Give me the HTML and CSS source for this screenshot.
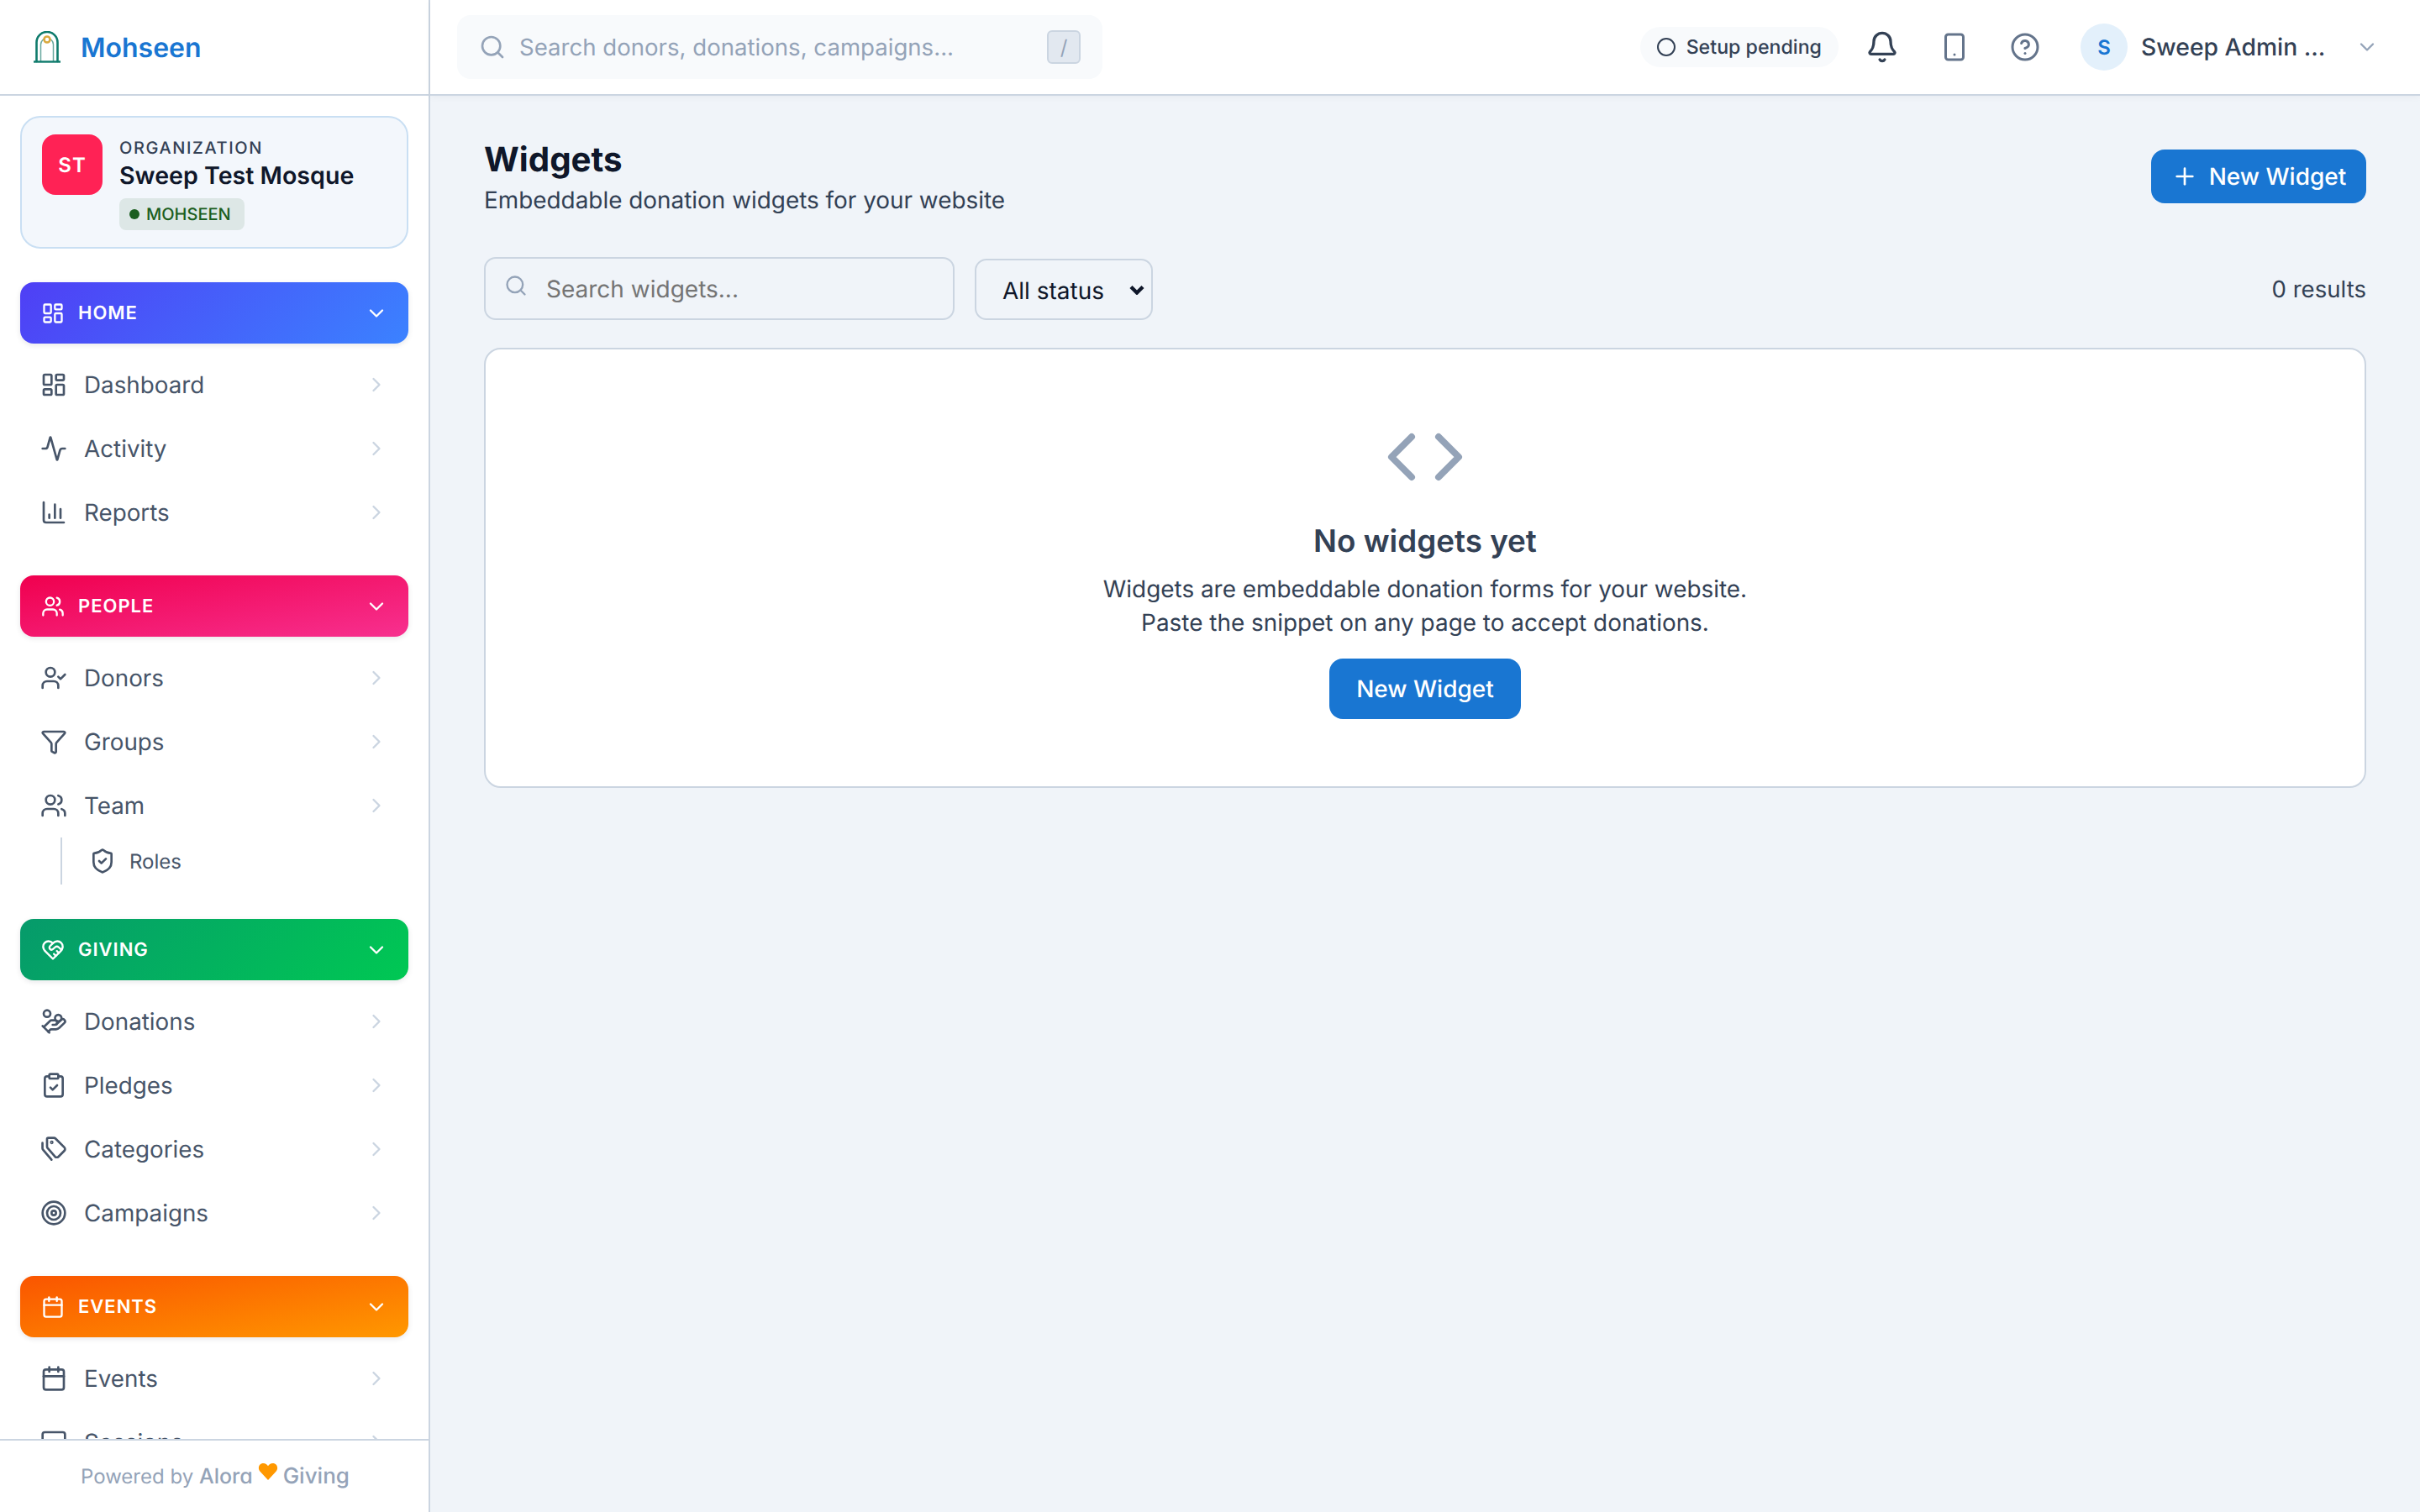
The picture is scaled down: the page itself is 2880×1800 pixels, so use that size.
FILE: index.html
```html
<!DOCTYPE html>
<html lang="en">
<head>
<meta charset="utf-8">
<title>Widgets</title>
<link rel="stylesheet" href="styles.css">
</head>
<body>
<svg class="sprite" width="0" height="0" aria-hidden="true">
  <symbol id="i-dash" viewBox="0 0 24 24"><rect width="7" height="9" x="3" y="3" rx="1"/><rect width="7" height="5" x="14" y="3" rx="1"/><rect width="7" height="9" x="14" y="12" rx="1"/><rect width="7" height="5" x="3" y="16" rx="1"/></symbol>
  <symbol id="i-activity" viewBox="0 0 24 24"><path d="M22 12h-2.48a2 2 0 0 0-1.93 1.46l-2.35 8.36a.25.25 0 0 1-.48 0L9.24 2.18a.25.25 0 0 0-.48 0l-2.35 8.36A2 2 0 0 1 4.49 12H2"/></symbol>
  <symbol id="i-chart" viewBox="0 0 24 24"><path d="M3 3v16a2 2 0 0 0 2 2h16"/><path d="M18 17V9"/><path d="M13 17V5"/><path d="M8 17v-3"/></symbol>
  <symbol id="i-users" viewBox="0 0 24 24"><path d="M16 21v-2a4 4 0 0 0-4-4H6a4 4 0 0 0-4 4v2"/><circle cx="9" cy="7" r="4"/><path d="M22 21v-2a4 4 0 0 0-3-3.87"/><path d="M16 3.13a4 4 0 0 1 0 7.75"/></symbol>
  <symbol id="i-usercheck" viewBox="0 0 24 24"><path d="M16 21v-2a4 4 0 0 0-4-4H6a4 4 0 0 0-4 4v2"/><circle cx="9" cy="7" r="4"/><polyline points="16 11 18 13 22 9"/></symbol>
  <symbol id="i-funnel" viewBox="0 0 24 24"><path d="M10 20a1 1 0 0 0 .553.895l2 1A1 1 0 0 0 14 21v-7a2 2 0 0 1 .517-1.341L21.74 4.67A1 1 0 0 0 21 3H3a1 1 0 0 0-.742 1.67l7.225 7.989A2 2 0 0 1 10 14z"/></symbol>
  <symbol id="i-shield" viewBox="0 0 24 24"><path d="M20 13c0 5-3.5 7.5-7.66 8.95a1 1 0 0 1-.67-.01C7.5 20.5 4 18 4 13V6a1 1 0 0 1 1-1c2 0 4.5-1.2 6.24-2.72a1.17 1.17 0 0 1 1.52 0C14.51 3.81 17 5 19 5a1 1 0 0 1 1 1z"/><path d="m9 12 2 2 4-4"/></symbol>
  <symbol id="i-hearthand" viewBox="0 0 24 24"><path d="M19 14c1.49-1.46 3-3.21 3-5.5A5.5 5.5 0 0 0 16.5 3c-1.76 0-3 .5-4.5 2-1.5-1.5-2.74-2-4.5-2A5.5 5.5 0 0 0 2 8.5c0 2.3 1.5 4.05 3 5.5l7 7Z"/><path d="M12 5 9.04 7.96a2.17 2.17 0 0 0 0 3.08c.82.82 2.13.85 3 .07l2.07-1.9a2.82 2.82 0 0 1 3.79 0l2.96 2.66"/><path d="m18 15-2-2"/><path d="m15 18-2-2"/></symbol>
  <symbol id="i-handcoins" viewBox="0 0 24 24"><path d="M11 15h2a2 2 0 1 0 0-4h-3c-.6 0-1.1.2-1.4.6L3 17"/><path d="m7 21 1.6-1.4c.3-.4.8-.6 1.4-.6h4c1.1 0 2.1-.4 2.8-1.2l4.6-4.4a2 2 0 0 0-2.75-2.91l-4.2 3.9"/><path d="m2 16 6 6"/><circle cx="16" cy="9" r="2.9"/><circle cx="6" cy="5" r="3"/></symbol>
  <symbol id="i-clip" viewBox="0 0 24 24"><rect width="8" height="4" x="8" y="2" rx="1" ry="1"/><path d="M16 4h2a2 2 0 0 1 2 2v14a2 2 0 0 1-2 2H6a2 2 0 0 1-2-2V6a2 2 0 0 1 2-2h2"/><path d="m9 14 2 2 4-4"/></symbol>
  <symbol id="i-tags" viewBox="0 0 24 24"><path d="M7 2h5.200a2 2 0 0 1 1.400.600l7.800 7.800a2.200 2.200 0 0 1 0 3.100l-5.200 5.200a2.200 2.200 0 0 1-3.100 0L6.600 11.200A2 2 0 0 1 6 9.800V3a1 1 0 0 1 1-1z"/><path d="M1.900 6.500v4.700a2 2 0 0 0 .6 1.400L10 21.500"/><circle cx="10.200" cy="6" r=".6"/></symbol>
  <symbol id="i-target" viewBox="0 0 24 24"><circle cx="12" cy="12" r="10"/><circle cx="12" cy="12" r="6"/><circle cx="12" cy="12" r="2"/></symbol>
  <symbol id="i-cal" viewBox="0 0 24 24"><path d="M8 2v4"/><path d="M16 2v4"/><rect width="18" height="18" x="3" y="4" rx="2"/><path d="M3 10h18"/></symbol>
  <symbol id="i-monitor" viewBox="0 0 24 24"><rect width="20" height="14" x="2" y="3" rx="2"/><path d="M8 21h8"/><path d="M12 17v4"/></symbol>
  <symbol id="i-down" viewBox="0 0 24 24"><path d="m6 9 6 6 6-6"/></symbol>
  <symbol id="i-right" viewBox="0 0 24 24"><path d="m9 18 6-6-6-6"/></symbol>
  <symbol id="i-search" viewBox="0 0 24 24"><circle cx="11" cy="11" r="8"/><path d="m21 21-4.3-4.3"/></symbol>
  <symbol id="i-bell" viewBox="0 0 24 24"><path d="M10.268 21a2 2 0 0 0 3.464 0"/><path d="M3.262 15.326A1 1 0 0 0 4 17h16a1 1 0 0 0 .74-1.673C19.41 13.956 18 12.499 18 8A6 6 0 0 0 6 8c0 4.499-1.411 5.956-2.738 7.326"/></symbol>
  <symbol id="i-phone" viewBox="0 0 24 24"><rect width="14" height="20" x="5" y="2" rx="2" ry="2"/><path d="M12 18h.01"/></symbol>
  <symbol id="i-help" viewBox="0 0 24 24"><circle cx="12" cy="12" r="10"/><path d="M9.09 9a3 3 0 0 1 5.83 1c0 2-3 3-3 3"/><path d="M12 17h.01"/></symbol>
  <symbol id="i-circle" viewBox="0 0 24 24"><circle cx="12" cy="12" r="10"/></symbol>
  <symbol id="i-plus" viewBox="0 0 24 24"><path d="M5 12h14"/><path d="M12 5v14"/></symbol>
  <symbol id="i-code" viewBox="0 0 24 24"><polyline points="16 18 22 12 16 6"/><polyline points="8 6 2 12 8 18"/></symbol>
</svg>

<div class="app">
  <aside class="sidebar">
    <div class="brand">
      <svg class="logo" viewBox="0 0 32 38" aria-hidden="true">
        <path class="logo-inner" d="M8.5 36V16a7.5 7.5 0 0 1 15 0V36"/>
        <path class="logo-outer" d="M3.500 36V13.500a12.500 12.500 0 0 1 25 0V36"/>
        <path class="logo-base" d="M0 36.500h32"/>
        <circle class="logo-gem" cx="16" cy="10" r="3.500"/>
      </svg>
      <span class="brand-name">Mohseen</span>
    </div>

    <div class="org-card">
      <div class="org-avatar">ST</div>
      <div class="org-info">
        <div class="org-label">ORGANIZATION</div>
        <div class="org-name">Sweep Test Mosque</div>
        <div class="org-badge"><span class="org-dot"></span>MOHSEEN</div>
      </div>
    </div>

    <nav class="nav">
      <section class="nav-section">
        <div class="nav-head head-home"><svg class="ico-head"><use href="#i-dash"/></svg><span class="head-label">HOME</span><svg class="ico-head"><use href="#i-down"/></svg></div>
        <a class="nav-row"><svg class="ico"><use href="#i-dash"/></svg><span class="row-label">Dashboard</span><svg class="ico-chev"><use href="#i-right"/></svg></a>
        <a class="nav-row"><svg class="ico"><use href="#i-activity"/></svg><span class="row-label">Activity</span><svg class="ico-chev"><use href="#i-right"/></svg></a>
        <a class="nav-row"><svg class="ico"><use href="#i-chart"/></svg><span class="row-label">Reports</span><svg class="ico-chev"><use href="#i-right"/></svg></a>
      </section>
      <section class="nav-section">
        <div class="nav-head head-people"><svg class="ico-head"><use href="#i-users"/></svg><span class="head-label">PEOPLE</span><svg class="ico-head"><use href="#i-down"/></svg></div>
        <a class="nav-row"><svg class="ico"><use href="#i-usercheck"/></svg><span class="row-label">Donors</span><svg class="ico-chev"><use href="#i-right"/></svg></a>
        <a class="nav-row"><svg class="ico"><use href="#i-funnel"/></svg><span class="row-label">Groups</span><svg class="ico-chev"><use href="#i-right"/></svg></a>
        <a class="nav-row"><svg class="ico"><use href="#i-users"/></svg><span class="row-label">Team</span><svg class="ico-chev"><use href="#i-right"/></svg></a>
        <div class="nav-sub"><a class="sub-row"><svg class="ico"><use href="#i-shield"/></svg><span>Roles</span></a></div>
      </section>
      <section class="nav-section">
        <div class="nav-head head-giving"><svg class="ico-head"><use href="#i-hearthand"/></svg><span class="head-label">GIVING</span><svg class="ico-head"><use href="#i-down"/></svg></div>
        <a class="nav-row"><svg class="ico"><use href="#i-handcoins"/></svg><span class="row-label">Donations</span><svg class="ico-chev"><use href="#i-right"/></svg></a>
        <a class="nav-row"><svg class="ico"><use href="#i-clip"/></svg><span class="row-label">Pledges</span><svg class="ico-chev"><use href="#i-right"/></svg></a>
        <a class="nav-row"><svg class="ico"><use href="#i-tags"/></svg><span class="row-label">Categories</span><svg class="ico-chev"><use href="#i-right"/></svg></a>
        <a class="nav-row"><svg class="ico"><use href="#i-target"/></svg><span class="row-label">Campaigns</span><svg class="ico-chev"><use href="#i-right"/></svg></a>
      </section>
      <section class="nav-section">
        <div class="nav-head head-events"><svg class="ico-head"><use href="#i-cal"/></svg><span class="head-label">EVENTS</span><svg class="ico-head"><use href="#i-down"/></svg></div>
        <a class="nav-row"><svg class="ico"><use href="#i-cal"/></svg><span class="row-label">Events</span><svg class="ico-chev"><use href="#i-right"/></svg></a>
        <a class="nav-row"><svg class="ico"><use href="#i-monitor"/></svg><span class="row-label">Sessions</span><svg class="ico-chev"><use href="#i-right"/></svg></a>
      </section>
    </nav>

    <footer class="side-foot">
      <span class="foot-text">Powered by <b class="foot-alora">Alora</b></span>
      <svg class="foot-heart" viewBox="0 0 24 24" aria-hidden="true"><path d="M12 22 2.500 11.800C-.5 8.500 .6 2 6.500 2c2.500 0 4.300 1.300 5.500 3.300C13.200 3.300 15 2 17.500 2c5.900 0 7 6.500 4 9.800z"/></svg>
      <b class="foot-giving">Giving</b>
    </footer>
  </aside>

  <div class="content">
    <header class="topbar">
      <label class="global-search">
        <svg class="ico-search"><use href="#i-search"/></svg>
        <input class="global-input" type="text" placeholder="Search donors, donations, campaigns...">
        <kbd class="kbd">/</kbd>
      </label>
      <div class="top-right">
        <div class="setup-pill"><svg class="ico-pill"><use href="#i-circle"/></svg><span>Setup pending</span></div>
        <svg class="ico-bell"><use href="#i-bell"/></svg>
        <svg class="ico-top"><use href="#i-phone"/></svg>
        <svg class="ico-top"><use href="#i-help"/></svg>
        <div class="user-avatar">S</div>
        <span class="user-name">Sweep Admin ...</span>
        <svg class="ico-user-chev"><use href="#i-down"/></svg>
      </div>
    </header>

    <main class="page">
      <div class="page-head">
        <div>
          <h1 class="page-title">Widgets</h1>
          <p class="page-sub">Embeddable donation widgets for your website</p>
        </div>
        <button class="btn btn-head" type="button"><svg class="ico-plus"><use href="#i-plus"/></svg>New Widget</button>
      </div>

      <div class="filters">
        <label class="filter-search">
          <svg class="ico-filter"><use href="#i-search"/></svg>
          <input class="filter-input" type="text" placeholder="Search widgets...">
        </label>
        <label class="select-wrap">
          <select class="filter-select"><option>All status</option></select>
          <svg class="select-arrow" viewBox="0 0 18 12" aria-hidden="true"><path d="M2 2.500 9 9.500l7-7"/></svg>
        </label>
        <span class="results">0 results</span>
      </div>

      <section class="empty">
        <svg class="ico-code"><use href="#i-code"/></svg>
        <h2 class="empty-title">No widgets yet</h2>
        <p class="empty-text">Widgets are embeddable donation forms for your website.<br>Paste the snippet on any page to accept donations.</p>
        <button class="btn btn-empty" type="button">New Widget</button>
      </section>
    </main>
  </div>
</div>
</body>
</html>
```
FILE: styles.css
```css
* { box-sizing: border-box; text-rendering: geometricPrecision; }
html, body { margin: 0; height: 100%; }
body { font-family: "Inter", "Liberation Sans", sans-serif; color: #334155; background: #f0f4f9; overflow: hidden; }
.sprite { position: absolute; }
svg { fill: none; stroke: currentColor; stroke-width: 2; stroke-linecap: round; stroke-linejoin: round; flex: none; }
a { color: inherit; text-decoration: none; }

.app { display: flex; height: 1800px; }

/* sidebar */
.sidebar { width: 512px; flex: none; height: 100%; background: #fff; border-right: 2px solid #cbd5e1; display: flex; flex-direction: column; }
.brand { height: 114px; flex: none; border-bottom: 2px solid #cbd5e1; display: flex; align-items: center; padding-left: 40px; }
.logo { width: 32px; height: 38px; margin-right: 24px; }
.logo-outer { stroke: #0f7b6c; stroke-width: 2.6; }
.logo-inner { stroke: #6aa99f; stroke-width: 1.5; }
.logo-base { stroke: #0f7b6c; stroke-width: 2.4; stroke-linecap: butt; }
.logo-gem { stroke: #d9a93f; stroke-width: 2.6; fill: #fff; }
.brand-name { font-size: 32px; font-weight: 600; color: #1976d2; }

.org-card { margin: 24px 24px 0; height: 158px; flex: none; border: 2px solid #c9dff3; border-radius: 24px; background: #f3f7fc; display: flex; padding: 20px 24px; }
.org-avatar { width: 72px; height: 72px; flex: none; border-radius: 16px; background: #ff2255; color: #fff; font-size: 24px; font-weight: 600; letter-spacing: 1px; display: flex; align-items: center; justify-content: center; }
.org-info { margin-left: 20px; min-width: 0; }
.org-label { font-size: 20px; line-height: 24px; margin-top: 4px; font-weight: 500; letter-spacing: 1.6px; color: #334155; }
.org-name { font-size: 28.6px; line-height: 36px; margin-top: 3px; font-weight: 600; color: #0f172a; white-space: nowrap; }
.org-badge { display: inline-flex; align-items: center; height: 38px; margin-top: 9px; padding: 0 16px 0 12px; border-radius: 8px; background: #dde7e6; color: #1b5e20; font-size: 20px; font-weight: 500; }
.org-dot { width: 12px; height: 12px; border-radius: 50%; background: #1b5e20; margin-right: 8px; }

.nav { flex: 1; min-height: 0; overflow: hidden; padding: 40px 24px 0; display: flex; flex-direction: column; gap: 37px; }
.nav-section { flex: none; }
.nav-head { height: 73px; border-radius: 16px; color: #fff; display: flex; align-items: center; padding: 0 24px 0 25px; margin-bottom: 11px; box-shadow: 0 2px 6px rgba(15, 23, 42, .1); }
.head-home { background: linear-gradient(135deg, #4f3ff5, #3b82ff); }
.head-people { background: linear-gradient(170deg, #f0004e, #f7308f); }
.head-giving { background: linear-gradient(135deg, #069a6b, #00c853); }
.head-events { background: linear-gradient(170deg, #fa5500, #ff9800); }
.ico-head { width: 28px; height: 28px; }
.head-label { flex: 1; margin-left: 16px; font-size: 22px; font-weight: 600; letter-spacing: 1px; }
.nav-row { height: 76px; display: flex; align-items: center; padding: 0 24px; color: #475569; }
.ico { width: 32px; height: 32px; color: #475569; }
.row-label { flex: 1; margin-left: 20px; font-size: 27.8px; }
.ico-chev { width: 28px; height: 28px; color: #cbd5e1; }
.nav-sub { margin: 0 0 4px 48px; border-left: 2px solid #cbd5e1; height: 56px; display: flex; align-items: center; padding-left: 32px; }
.sub-row { display: flex; align-items: center; gap: 16px; font-size: 24px; color: #475569; }

.side-foot { height: 87px; flex: none; border-top: 2px solid #cbd5e1; display: flex; align-items: center; padding-left: 96px; color: #94a3b8; font-size: 24px; background: #fff; }
.foot-alora { font-size: 25px; font-weight: 500; font-feature-settings: "cv11"; }
.foot-giving { font-size: 26px; font-weight: 500; font-feature-settings: "cv11"; }
.foot-heart { width: 24px; height: 24px; fill: #ff9800; stroke: none; margin: -12px 6px 0 6px; }

/* top bar */
.content { flex: 1; min-width: 0; display: flex; flex-direction: column; }
.topbar { height: 114px; flex: none; background: #fff; border-bottom: 2px solid #cbd5e1; box-shadow: 0 2px 8px rgba(15, 23, 42, .04); display: flex; align-items: center; padding: 0 49px 0 32px; }
.global-search { width: 768px; height: 76px; background: #f8fafc; border-radius: 16px; display: flex; align-items: center; padding: 0 26px; }
.ico-search { width: 32px; height: 32px; color: #94a3b8; }
.global-input { flex: 1; min-width: 0; border: 0; outline: 0; background: transparent; font: 400 27.6px "Inter", sans-serif; margin-left: 16px; padding: 0; color: #334155; }
.global-input::placeholder { color: #94a3b8; opacity: 1; }
.kbd { width: 40px; height: 40px; border: 2px solid #cbd5e1; border-radius: 6px; background: #e2e8f0; color: #94a3b8; font: 400 24px "Inter", sans-serif; display: flex; align-items: center; justify-content: center; }
.top-right { margin-left: auto; display: flex; align-items: center; }
.setup-pill { height: 48px; border-radius: 24px; background: #f8fafc; display: flex; align-items: center; padding: 0 20px 0 19px; font-size: 23.2px; font-weight: 500; color: #334155; gap: 12px; margin-right: 32px; }
.ico-pill { width: 24px; height: 24px; }
.ico-bell { width: 40px; height: 40px; color: #334155; margin-right: 48px; }
.ico-top { width: 36px; height: 36px; color: #64748b; margin-right: 48px; }
.user-avatar { width: 56px; height: 56px; border-radius: 50%; background: #e3f0fb; color: #1976d2; font-size: 24px; font-weight: 600; display: flex; align-items: center; justify-content: center; }
.user-name { width: 217px; margin-left: 16px; font-size: 28.3px; font-weight: 500; color: #334155; white-space: nowrap; }
.ico-user-chev { width: 28px; height: 28px; color: #94a3b8; margin-left: 38px; }

/* page */
.page { flex: 1; padding: 50px 64px 0; }
.page-head { display: flex; justify-content: space-between; align-items: center; }
.page-title { margin: 0; font-size: 40.3px; line-height: 52px; font-weight: 700; color: #0f172a; }
.page-sub { margin: 2px 0 0; font-size: 27.9px; line-height: 40px; color: #334155; }
.btn { border: 0; background: #1976d2; color: #fff; font: 500 28px "Inter", sans-serif; border-radius: 16px; display: inline-flex; align-items: center; justify-content: center; }
.btn-head { width: 256px; height: 64px; padding: 0; gap: 13px; margin-top: -3px; }
.ico-plus { width: 32px; height: 32px; }

.filters { display: flex; align-items: center; margin-top: 48px; }
.filter-search { position: relative; width: 560px; height: 75px; margin-right: 24px; display: block; }
.ico-filter { position: absolute; left: 24px; top: 20px; width: 28px; height: 28px; color: #94a3b8; }
.filter-input { width: 100%; height: 100%; border: 2px solid #cbd5e1; border-radius: 14px; background: transparent; padding: 0 0 0 72px; outline: 0; font: 400 28px "Inter", sans-serif; color: #334155; }
.filter-input::placeholder { color: #757575; opacity: 1; }
.select-wrap { position: relative; display: block; width: 212px; height: 73px; margin-top: 2px; }
.filter-select { appearance: none; width: 100%; height: 100%; border: 2px solid #cbd5e1; border-radius: 14px; background: transparent; padding: 2px 0 0 31px; font: 400 28px "Inter", sans-serif; color: #0f172a; }
.select-arrow { position: absolute; left: 184px; top: 31px; width: 18px; height: 12px; stroke: #0f172a; stroke-width: 4.4; stroke-linecap: butt; stroke-linejoin: miter; pointer-events: none; }
.results { margin-left: auto; font-size: 27.6px; color: #334155; }

.empty { margin-top: 33px; height: 524px; border: 2px solid #cbd5e1; border-radius: 20px; background: #fff; display: flex; flex-direction: column; align-items: center; padding-top: 80px; }
.ico-code { width: 96px; height: 96px; color: #94a3b8; }
.empty-title { margin: 28px 0 0; font-size: 36.8px; line-height: 48px; font-weight: 600; color: #334155; }
.empty-text { margin: 13px 0 0; font-size: 27.9px; line-height: 40px; text-align: center; color: #334155; }
.btn-empty { width: 228px; height: 72px; margin-top: 23px; padding: 0; }
```
